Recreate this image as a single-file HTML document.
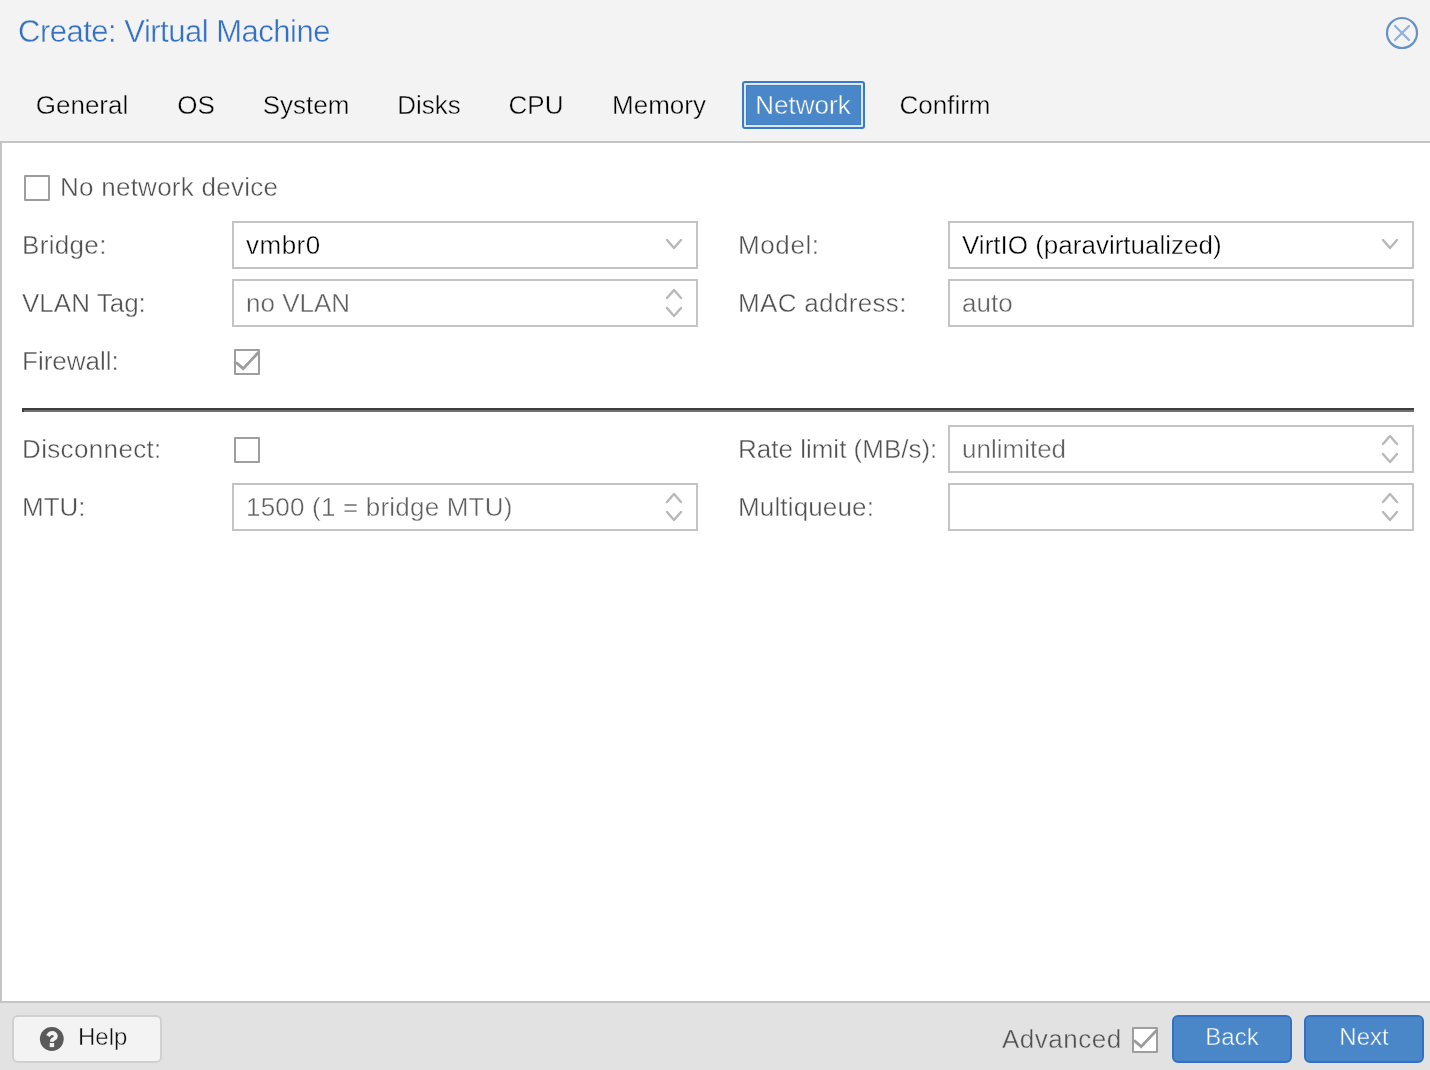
<!DOCTYPE html>
<html><head><meta charset="utf-8">
<style>
html,body{margin:0;padding:0;}
.t,.tab{will-change:transform;-webkit-text-stroke:0.4px #fff;}
.hd{-webkit-text-stroke:0.4px #f3f3f3;}
.bl{-webkit-text-stroke:0.4px #4a87c9;}
.ft{-webkit-text-stroke:0.4px #e2e2e2;}
body{width:1430px;height:1070px;overflow:hidden;background:#f3f3f3;position:relative;font-family:"Liberation Sans",sans-serif;}
.t{position:absolute;font-size:26px;line-height:26px;white-space:nowrap;}
.lbl{color:#505050;}
.ph{color:#5f5f5f;}
.tab{position:absolute;width:200px;text-align:center;font-size:26px;line-height:26px;color:#000;white-space:nowrap;}
.panel{position:absolute;left:0;top:141px;width:1428px;height:858px;background:#fff;border-top:2px solid #c4c4c4;border-left:2px solid #c4c4c4;border-bottom:2px solid #c4c4c4;}
.footer{position:absolute;left:0;top:1003px;width:1430px;height:67px;background:#e2e2e2;}
.fld{position:absolute;width:462px;height:44px;border:2px solid #c4c4c4;background:#fff;}
.cb{position:absolute;width:22px;height:22px;border:2px solid #9e9e9e;background:#fff;border-radius:1px;}
.hr{position:absolute;left:22px;top:408px;width:1392px;height:2px;background:#3e3e3e;}
.hr2{position:absolute;left:24px;top:410px;width:1390px;height:2px;background:#717171;}
.hr3{position:absolute;left:22px;top:410px;width:2px;height:2px;background:#3e3e3e;}
.btn{position:absolute;top:1015px;width:116px;height:44px;border:2px solid #3270c2;border-radius:6px;background:#4a87c9;}
svg{position:absolute;left:0;top:0;}
</style></head><body>
<div class="t hd" style="left:18px;top:16px;font-size:31px;line-height:31px;color:#3371c5;letter-spacing:-0.5px;">Create: Virtual Machine</div>

<!-- tabs -->
<div style="position:absolute;left:742px;top:81px;width:119px;height:44px;border:2px solid #3a7bc8;border-radius:3px;background:#dde9f6;"></div>
<div style="position:absolute;left:746px;top:85px;width:115px;height:40px;background:#4a87c9;box-shadow:inset 0 0 0 1px #3e7fc8;"></div>
<div class="tab hd" style="left:-18px;top:92px;">General</div>
<div class="tab hd" style="left:96px;top:92px;">OS</div>
<div class="tab hd" style="left:206px;top:92px;">System</div>
<div class="tab hd" style="left:329px;top:92px;">Disks</div>
<div class="tab hd" style="left:436px;top:92px;">CPU</div>
<div class="tab hd" style="left:559px;top:92px;">Memory</div>
<div class="tab bl" style="left:703px;top:92px;color:#fff;">Network</div>
<div class="tab hd" style="left:845px;top:92px;">Confirm</div>

<div class="panel"></div>
<div class="footer"></div>

<!-- form -->
<div class="cb" style="left:24px;top:175px;"></div>
<div class="t lbl" style="left:60px;top:174px;;letter-spacing:0.25px">No network device</div>

<div class="t lbl" style="left:22px;top:232px;;letter-spacing:0.33px">Bridge:</div>
<div class="fld" style="left:232px;top:221px;"></div>
<div class="t" style="left:246px;top:232px;color:#000;;letter-spacing:0.5px">vmbr0</div>

<div class="t lbl" style="left:22px;top:290px;">VLAN Tag:</div>
<div class="fld" style="left:232px;top:279px;"></div>
<div class="t ph" style="left:246px;top:290px;">no VLAN</div>

<div class="t lbl" style="left:22px;top:348px;">Firewall:</div>
<div class="cb" style="left:234px;top:349px;"></div>

<div class="t lbl" style="left:738px;top:232px;;letter-spacing:0.6px">Model:</div>
<div class="fld" style="left:948px;top:221px;"></div>
<div class="t" style="left:962px;top:232px;color:#000;">VirtIO (paravirtualized)</div>

<div class="t lbl" style="left:738px;top:290px;;letter-spacing:0.33px">MAC address:</div>
<div class="fld" style="left:948px;top:279px;"></div>
<div class="t ph" style="left:962px;top:290px;">auto</div>

<div class="hr"></div><div class="hr2"></div><div class="hr3"></div>

<div class="t lbl" style="left:22px;top:436px;;letter-spacing:0.35px">Disconnect:</div>
<div class="cb" style="left:234px;top:437px;"></div>

<div class="t lbl" style="left:22px;top:494px;">MTU:</div>
<div class="fld" style="left:232px;top:483px;"></div>
<div class="t ph" style="left:246px;top:494px;;letter-spacing:0.2px">1500 (1 = bridge MTU)</div>

<div class="t lbl" style="left:738px;top:436px;">Rate limit (MB/s):</div>
<div class="fld" style="left:948px;top:425px;"></div>
<div class="t ph" style="left:962px;top:436px;">unlimited</div>

<div class="t lbl" style="left:738px;top:494px;;letter-spacing:0.15px">Multiqueue:</div>
<div class="fld" style="left:948px;top:483px;"></div>

<!-- footer -->
<div style="position:absolute;left:12px;top:1015px;width:146px;height:44px;border:2px solid #d0d0d0;border-radius:6px;background:#f3f3f3;"></div>
<div class="t hd" style="left:78px;top:1025px;font-size:24px;line-height:24px;color:#111;">Help</div>
<div class="t lbl ft" style="left:1002px;top:1026px;letter-spacing:0.5px;">Advanced</div>
<div class="cb" style="left:1132px;top:1027px;"></div>
<div class="btn" style="left:1172px;"></div>
<div class="btn" style="left:1304px;"></div>
<div class="tab bl" style="left:1132px;top:1025px;font-size:24px;line-height:24px;color:#fff;">Back</div>
<div class="tab bl" style="left:1264px;top:1025px;font-size:24px;line-height:24px;color:#fff;">Next</div>

<svg width="1430" height="1070" viewBox="0 0 1430 1070">
  <g fill="none" stroke="#b8b8b8" stroke-width="2.4" stroke-linecap="round" stroke-linejoin="round">
    <polyline points="667,240 674,248 681,240"/>
    <polyline points="1383,240 1390,248 1397,240"/>
    <polyline points="667,298 674,290 681,298"/>
    <polyline points="667,308 674,316 681,308"/>
    <polyline points="667,502 674,494 681,502"/>
    <polyline points="667,512 674,520 681,512"/>
    <polyline points="1383,444 1390,436 1397,444"/>
    <polyline points="1383,454 1390,462 1397,454"/>
    <polyline points="1383,502 1390,494 1397,502"/>
    <polyline points="1383,512 1390,520 1397,512"/>
  </g>
  <g fill="none" stroke="#9c9c9c" stroke-width="2.8" stroke-linejoin="miter">
    <polyline points="236,362.4 243.2,368.6 258.6,352.2"/>
    <polyline points="1134,1040.4 1141.2,1046.6 1156.6,1030.2"/>
  </g>
  <circle cx="1402" cy="33" r="15" fill="none" stroke="#6690c8" stroke-width="2.2"/>
  <g stroke="#8fb1dc" stroke-width="2.2" stroke-linecap="round">
    <line x1="1395" y1="26" x2="1409" y2="40"/><line x1="1409" y1="26" x2="1395" y2="40"/>
  </g>
  <circle cx="51.8" cy="1039" r="11.9" fill="#5a5a5a"/>
  <path d="M48 1035.9 C49 1034.2 50.3 1033 52.1 1033 C54.3 1033 55.8 1034.3 55.8 1036.2 C55.8 1038.2 53.9 1038.8 52.8 1039.6 C52.1 1040.1 51.9 1040.8 51.9 1041.7" fill="none" stroke="#f3f3f3" stroke-width="4"/><rect x="49.7" y="1043" width="4.4" height="4.1" fill="#f3f3f3"/>
</svg>
</body></html>
